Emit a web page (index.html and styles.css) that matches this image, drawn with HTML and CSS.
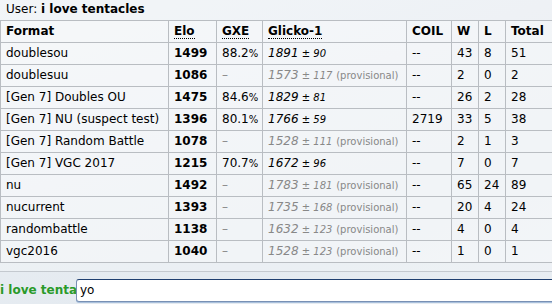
FILE: index.html
```html
<!DOCTYPE html>
<html>
<head>
<meta charset="utf-8">
<link rel="stylesheet" href="styles.css">
</head>
<body>
<div class="log">
  <div class="user">User: <strong>i love tentacles</strong></div>
  <table class="ladder">
    <colgroup>
      <col class="c-format"><col class="c-elo"><col class="c-gxe"><col class="c-glicko"><col class="c-coil"><col class="c-w"><col class="c-l"><col class="c-total">
    </colgroup>
    <tr>
      <th>Format</th>
      <th><abbr>Elo</abbr></th>
      <th><abbr>GXE</abbr></th>
      <th><abbr>Glicko-1</abbr></th>
      <th>COIL</th><th>W</th><th>L</th><th>Total</th>
    </tr>
    <tr><td>doublesou</td><td><b>1499</b></td><td>88.2<small>%</small></td><td><em>1891<small> ± 90</small></em></td><td>--</td><td>43</td><td>8</td><td>51</td></tr>
    <tr><td>doublesuu</td><td><b>1086</b></td><td><span class="dim">–</span></td><td class="prov"><em>1573<small> ± 117</small></em> <small>(provisional)</small></td><td>--</td><td>2</td><td>0</td><td>2</td></tr>
    <tr><td>[Gen 7] Doubles OU</td><td><b>1475</b></td><td>84.6<small>%</small></td><td><em>1829<small> ± 81</small></em></td><td>--</td><td>26</td><td>2</td><td>28</td></tr>
    <tr><td>[Gen 7] NU (suspect test)</td><td><b>1396</b></td><td>80.1<small>%</small></td><td><em>1766<small> ± 59</small></em></td><td>2719</td><td>33</td><td>5</td><td>38</td></tr>
    <tr><td>[Gen 7] Random Battle</td><td><b>1078</b></td><td><span class="dim">–</span></td><td class="prov"><em>1528<small> ± 111</small></em> <small>(provisional)</small></td><td>--</td><td>2</td><td>1</td><td>3</td></tr>
    <tr><td>[Gen 7] VGC 2017</td><td><b>1215</b></td><td>70.7<small>%</small></td><td><em>1672<small> ± 96</small></em></td><td>--</td><td>7</td><td>0</td><td>7</td></tr>
    <tr><td>nu</td><td><b>1492</b></td><td><span class="dim">–</span></td><td class="prov"><em>1783<small> ± 181</small></em> <small>(provisional)</small></td><td>--</td><td>65</td><td>24</td><td>89</td></tr>
    <tr><td>nucurrent</td><td><b>1393</b></td><td><span class="dim">–</span></td><td class="prov"><em>1735<small> ± 168</small></em> <small>(provisional)</small></td><td>--</td><td>20</td><td>4</td><td>24</td></tr>
    <tr><td>randombattle</td><td><b>1138</b></td><td><span class="dim">–</span></td><td class="prov"><em>1632<small> ± 123</small></em> <small>(provisional)</small></td><td>--</td><td>4</td><td>0</td><td>4</td></tr>
    <tr><td>vgc2016</td><td><b>1040</b></td><td><span class="dim">–</span></td><td class="prov"><em>1528<small> ± 123</small></em> <small>(provisional)</small></td><td>--</td><td>1</td><td>0</td><td>1</td></tr>
  </table>
</div>
<div class="chatbar">
  <div class="label">i love tentacles</div>
  <div class="textbox">yo</div>
</div>
</body>
</html>
```
FILE: styles.css
```css
html, body {
  margin: 0;
  padding: 0;
}
body {
  width: 552px;
  height: 304px;
  overflow: hidden;
  font-family: "DejaVu Sans", Verdana, sans-serif;
  font-size: 12px;
  color: #000;
  background: linear-gradient(160deg, #eef2f6 0%, #e8edf2 40%, #e4eaf0 70%, #e9eef3 100%);
}
.log {
  border-bottom: 1px solid #c4c9cf;
  padding-bottom: 8px;
  background: rgba(255, 255, 255, 0.25);
}
.user {
  height: 20px;
  line-height: 19px;
  padding-left: 6px;
}
.ladder {
  border-collapse: collapse;
  table-layout: fixed;
  width: 560px;
  background: rgba(255, 255, 255, 0.3);
}
.c-format { width: 168px; }
.c-elo { width: 48px; }
.c-gxe { width: 46px; }
.c-glicko { width: 144px; }
.c-coil { width: 45px; }
.c-w { width: 27px; }
.c-l { width: 27px; }
.c-total { width: 55px; }
.ladder th,
.ladder td {
  border: 1px solid #b9bdc2;
  padding: 3px 5px;
  line-height: 15px;
  height: 15px;
  text-align: left;
  white-space: nowrap;
  overflow: hidden;
}
.ladder th {
  font-weight: bold;
}
.ladder abbr {
  text-decoration: none;
  border-bottom: 1px dotted #000;
}
.ladder small {
  font-size: 10px;
}
.ladder .dim,
.ladder .prov {
  color: #888;
}
.chatbar {
  display: flex;
  align-items: flex-start;
  padding-top: 7px;
}
.label {
  width: 76px;
  flex: none;
  overflow: hidden;
  white-space: nowrap;
  color: #2a9a2a;
  font-weight: bold;
  line-height: 23px;
}
.textbox {
  flex: 1;
  height: 21px;
  line-height: 21px;
  margin-right: -6px;
  padding-left: 3px;
  background: #fff;
  border: 1px solid #7890b4;
  border-top-color: #1f3f70;
  border-radius: 3px;
  box-shadow: 0 1px 0 #a9c0dc;
}
```
